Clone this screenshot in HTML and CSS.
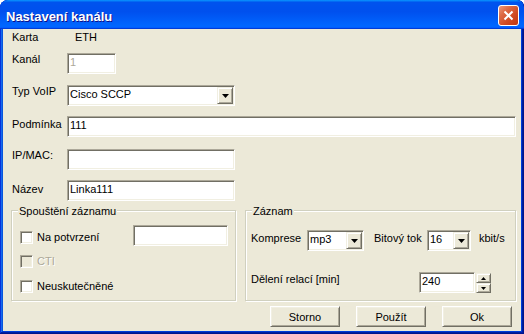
FILE: index.html
```html
<!DOCTYPE html>
<html lang="cs">
<head>
    <meta charset="UTF-8">
    <title>Nastavení kanálu</title>
    <link rel="stylesheet" href="styles.css">
</head>
<body>
    <div class="window">
        <header class="titlebar">
            <div class="title">Nastavení kanálu</div>
            <button class="close-btn">
                <svg width="11" height="11" viewBox="0 0 11 11"><path d="M1.5 1.5 L9.5 9.5 M9.5 1.5 L1.5 9.5" stroke="#fff" stroke-width="2"/></svg>
            </button>
        </header>

        <main class="client">
            <div class="row row-karta">
                <span class="label">Karta</span>
                <span class="value">ETH</span>
            </div>
            <div class="row row-kanal">
                <span class="label">Kanál</span>
                <div class="edit edit-kanal disabled">1</div>
            </div>
            <div class="row row-typ">
                <span class="label">Typ VoIP</span>
                <div class="combo combo-typ">
                    <span class="combo-text">Cisco SCCP</span>
                    <span class="drop-btn"><svg width="7" height="4" viewBox="0 0 7 4"><path d="M0 0h7L3.5 4z"/></svg></span>
                </div>
            </div>
            <div class="row row-podminka">
                <span class="label">Podmínka</span>
                <div class="edit edit-wide">111</div>
            </div>
            <div class="row row-ip">
                <span class="label">IP/MAC:</span>
                <div class="edit edit-mid"></div>
            </div>
            <div class="row row-nazev">
                <span class="label">Název</span>
                <div class="edit edit-mid">Linka111</div>
            </div>

            <div class="groups">
                <div class="group group-start">
                    <span class="group-title">Spouštění záznamu</span>
                    <div class="opt-row">
                        <label class="check-opt first"><span class="check"></span>Na potvrzení</label>
                        <div class="edit edit-confirm"></div>
                    </div>
                    <label class="check-opt cti disabled"><span class="check"></span>CTI</label>
                    <label class="check-opt last"><span class="check"></span>Neuskutečněné</label>
                </div>

                <div class="group group-rec">
                    <span class="group-title">Záznam</span>
                    <div class="rec-row">
                        <span class="rec-label compress">Komprese</span>
                        <div class="combo combo-mp3">
                            <span class="combo-text">mp3</span>
                            <span class="drop-btn"><svg width="7" height="4" viewBox="0 0 7 4"><path d="M0 0h7L3.5 4z"/></svg></span>
                        </div>
                        <span class="rec-label bitrate">Bitový tok</span>
                        <div class="combo combo-rate">
                            <span class="combo-text">16</span>
                            <span class="drop-btn"><svg width="7" height="4" viewBox="0 0 7 4"><path d="M0 0h7L3.5 4z"/></svg></span>
                        </div>
                        <span class="rec-label unit">kbit/s</span>
                    </div>
                    <div class="rec-row split">
                        <span class="rec-label split-label">Dělení relací [min]</span>
                        <div class="edit edit-split">240</div>
                        <div class="spinner">
                            <span class="spin-btn"><svg width="5" height="3" viewBox="0 0 5 3"><path d="M2.5 0L5 3H0z"/></svg></span>
                            <span class="spin-btn"><svg width="5" height="3" viewBox="0 0 5 3"><path d="M0 0h5L2.5 3z"/></svg></span>
                        </div>
                    </div>
                </div>
            </div>

            <div class="buttons">
                <button class="btn">Storno</button>
                <button class="btn">Použít</button>
                <button class="btn">Ok</button>
            </div>
        </main>
    </div>
</body>
</html>
```

FILE: styles.css
```css
* {
    margin: 0;
    padding: 0;
    box-sizing: border-box;
}

body {
    font-family: "Liberation Sans", Arial, sans-serif;
    font-size: 11px;
    line-height: 13px;
    color: #000;
    background: #fff;
    overflow: hidden;
}

button {
    font: inherit;
    color: inherit;
}

.window {
    width: 524px;
    height: 334px;
    display: flex;
    flex-direction: column;
    background: #0055e5;
    border-radius: 8px 7px 0 0;
    padding-bottom: 3px;
    overflow: hidden;
    box-shadow: inset -1px -1px #00138c, inset 1px 1px #0831d9,
        inset -2px -2px #001ea0, inset 2px 2px #166aee,
        inset -3px -3px #003bda, inset 3px 3px #0855dd;
}

.titlebar {
    height: 29px;
    flex: none;
    display: flex;
    justify-content: space-between;
    align-items: flex-start;
    padding: 5px 5px 0 6px;
    border-radius: 8px 7px 0 0;
    background: linear-gradient(180deg, #0997ff, #0053ee 8%, #0050ee 40%, #06f 88%, #06f 93%, #005bff 95%, #003dd7 96%, #003dd7);
}

.title {
    color: #fff;
    font-weight: bold;
    font-size: 13px;
    line-height: 16px;
    padding-top: 4px;
    text-shadow: 1px 1px #0f1089;
}

.close-btn {
    width: 21px;
    height: 21px;
    border: 1px solid #fff;
    border-radius: 3px;
    display: flex;
    align-items: center;
    justify-content: center;
    background: linear-gradient(135deg, #ec9a7c 0%, #dd6a45 30%, #cf4a22 65%, #c2360e 100%);
}

.client {
    flex: 1;
    margin: 0 3px;
    background: #ece9d8;
    padding-top: 2px;
    display: flex;
    flex-direction: column;
}

/* form rows */
.row {
    display: flex;
    align-items: flex-start;
    padding-left: 9px;
}

.label {
    width: 55px;
    flex: none;
}

.value {
    margin-left: 8px;
}

.row-kanal { margin-top: 9px; }
.row-typ { margin-top: 11px; }
.row-podminka { margin-top: 10px; }
.row-podminka .label { padding-top: 2px; }
.row-ip { margin-top: 12px; }
.row-nazev { margin-top: 10px; }
.row-nazev .label { padding-top: 3px; }

/* sunken controls */
.edit,
.combo,
.check {
    background: #fff;
    border: 1px solid;
    border-color: #aca899 #fff #fff #aca899;
    box-shadow: inset 1px 1px 0 #716f64, inset -1px -1px 0 #f1efe2;
}

.edit {
    height: 21px;
    padding: 2px 0 0 2px;
    white-space: nowrap;
}

.edit.disabled {
    color: #aca899;
}

.edit-kanal { width: 49px; }
.edit-wide { width: 449px; }
.edit-mid { width: 168px; }

.combo {
    height: 21px;
    display: flex;
}

.combo-text {
    flex: 1;
    padding: 2px 0 0 2px;
}

.combo-typ { width: 168px; }

.drop-btn,
.spin-btn {
    background: #ece9d8;
    border: 1px solid;
    border-color: #f1efe2 #716f64 #716f64 #f1efe2;
    box-shadow: inset 1px 1px 0 #fff, inset -1px -1px 0 #aca899;
    display: flex;
    align-items: center;
    justify-content: center;
}

.drop-btn {
    width: 16px;
    margin: 1px;
    padding-top: 1px;
}

/* group boxes */
.groups {
    display: flex;
    gap: 9px;
    margin-top: 9px;
    padding-left: 8px;
}

.group {
    position: relative;
    height: 91px;
    border: 1px solid #d0d0bf;
    box-shadow: inset 1px 1px 0 #fff, 1px 1px 0 #fff;
}

.group-title {
    position: absolute;
    top: -6px;
    left: 6px;
    padding: 0 1px;
    background: #ece9d8;
}

.group-start {
    width: 225px;
    padding: 14px 7px 0 8px;
}

.opt-row {
    display: flex;
    align-items: flex-start;
}

.check-opt {
    display: flex;
    align-items: center;
    gap: 4px;
}

.check-opt.first { margin-top: 6px; }
.check-opt.cti { margin-top: 9px; }
.check-opt.last { margin-top: 12px; }

.check {
    width: 13px;
    height: 13px;
    flex: none;
}

.check-opt.disabled {
    color: #aca899;
    text-shadow: 1px 1px 0 #fff;
}

.check-opt.disabled .check {
    background: #ece9d8;
}

.edit-confirm {
    width: 95px;
    margin-left: auto;
}

.group-rec {
    width: 271px;
    padding: 19px 0 0 5px;
}

.rec-row {
    display: flex;
    align-items: flex-start;
}

.rec-label {
    flex: none;
    padding-top: 2px;
}

.compress { width: 56px; }
.combo-mp3 { width: 57px; }
.bitrate { width: 53px; margin-left: 10px; }
.combo-rate { width: 44px; }
.unit { margin-left: 8px; }

.rec-row.split { margin-top: 21px; }
.split-label { width: 168px; padding-top: 1px; }
.edit-split { width: 56px; }

.spinner {
    margin: 1px 0 0 1px;
    width: 15px;
    display: flex;
    flex-direction: column;
}

.spin-btn {
    height: 10px;
}

/* dialog buttons */
.buttons {
    display: flex;
    justify-content: flex-end;
    gap: 16px;
    margin-top: 5px;
    padding-right: 9px;
}

.btn {
    width: 70px;
    height: 21px;
    background: #ece9d8;
    border: 1px solid;
    border-color: #fff #716f64 #716f64 #fff;
    box-shadow: inset 1px 1px 0 #f1efe2, inset -1px -1px 0 #aca899;
    padding-top: 1px;
}
```
